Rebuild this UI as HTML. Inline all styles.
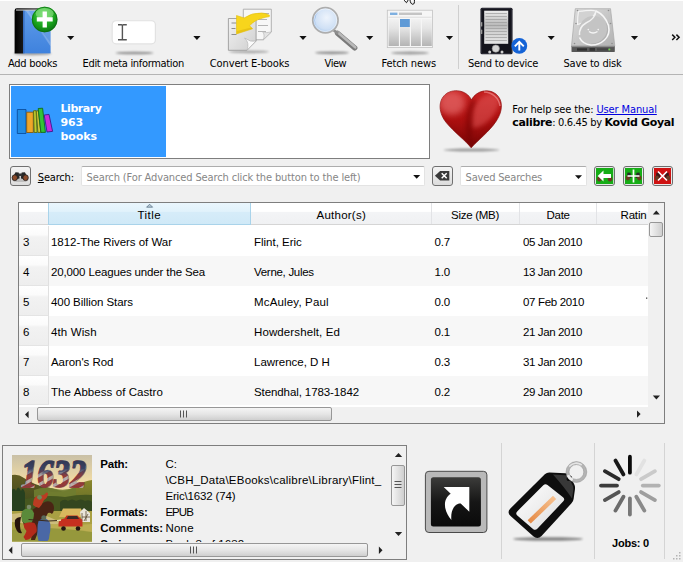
<!DOCTYPE html>
<html><head><meta charset="utf-8"><title>calibre</title>
<style>
html,body{margin:0;padding:0;}
body{width:683px;height:562px;overflow:hidden;background:#f0f0f0;position:relative;font-family:"DejaVu Sans Condensed","Liberation Sans",sans-serif;font-size:11px;color:#000;}
.t{position:absolute;white-space:nowrap;line-height:16px;}
.t a{color:#0000e0;text-decoration:underline;}
.abs{position:absolute;}
#gfx{position:absolute;left:0;top:0;}
.row{position:absolute;left:49px;width:600px;height:30px;}
.rh{position:absolute;left:19px;width:29px;height:29px;border-right:1px solid #e0e0e0;border-bottom:1px solid #e4e4e4;background:linear-gradient(#fff 0%,#fbfbfb 30%,#f2f2f2 38%,#eeeeee 100%);}
.dt{position:absolute;white-space:nowrap;font-family:"Liberation Sans","DejaVu Sans",sans-serif;font-size:11.5px;line-height:16px;}
</style></head>
<body>
<!-- toolbar -->
<div class="abs" style="left:0;top:0;width:683px;height:1px;background:#fff"></div>
<div class="abs" style="left:0;top:74px;width:683px;height:1px;background:#b4b4b4"></div>
<div class="abs" style="left:458px;top:5px;width:1px;height:64px;background:#cfcfcf"></div>

<!-- library list -->
<div class="abs" style="left:9px;top:84px;width:419px;height:73px;border:1px solid #7e7e7e;background:#fff">
  <div class="abs" style="left:1px;top:1px;width:155px;height:71px;background:#3399ff"></div>
</div>

<!-- search row -->
<div class="abs" style="left:10px;top:166px;width:19px;height:18px;border:1px solid #707070;border-radius:3px;background:linear-gradient(#f4f4f4,#dcdcdc)"></div>
<div class="abs" style="left:81px;top:166px;width:342px;height:18px;border:1px solid #e3e3e3;border-top-color:#adadad;border-radius:2px;background:#fff"></div>
<div class="abs" style="left:432px;top:166px;width:19px;height:18px;border:1px solid #707070;border-radius:3px;background:linear-gradient(#f4f4f4,#dcdcdc)"></div>
<div class="abs" style="left:460px;top:166px;width:125px;height:18px;border:1px solid #e3e3e3;border-top-color:#adadad;border-radius:2px;background:#fff"></div>

<!-- table -->
<div class="abs" id="table" style="left:18px;top:202px;width:645px;height:220px;border:1px solid #7e7e7e;background:#fff"></div>
<div class="abs" style="left:19px;top:203px;width:629px;height:22px;background:linear-gradient(#ffffff 0%,#ffffff 40%,#f3f4f6 45%,#f0f1f3 100%);border-bottom:1px solid #d5d5d5;box-sizing:border-box"></div>
<div class="abs" style="left:48px;top:203px;width:203px;height:22px;background:linear-gradient(#eaf6fd 0%,#e1f2fb 40%,#d6ecf9 45%,#d0e9f7 100%);border:1px solid #a9d3ea;border-top:none;box-sizing:border-box"></div>
<div class="abs" style="left:431px;top:203px;width:1px;height:21px;background:#e2e3e6"></div>
<div class="abs" style="left:519px;top:203px;width:1px;height:21px;background:#e2e3e6"></div>
<div class="abs" style="left:596px;top:203px;width:1px;height:21px;background:#e2e3e6"></div>
<div class="row" style="top:256px;background:#f7f7f7"></div>
<div class="row" style="top:316px;background:#f7f7f7"></div>
<div class="row" style="top:376px;background:#f7f7f7;height:29px"></div>
<div class="rh" style="top:226px"></div><div class="rh" style="top:256px"></div><div class="rh" style="top:286px"></div>
<div class="rh" style="top:316px"></div><div class="rh" style="top:346px"></div><div class="rh" style="top:376px;height:28px"></div>
<!-- table scrollbars -->
<div class="abs" style="left:648px;top:203px;width:16px;height:204px;background:#f0f0f0"></div>
<div class="abs" style="left:19px;top:407px;width:645px;height:16px;background:#f0f0f0"></div>
<div class="abs" style="left:649px;top:222px;width:12px;height:13px;border:1px solid #979797;border-radius:2px;background:linear-gradient(90deg,#f5f5f5,#e2e2e2 50%,#cfcfcf)"></div>
<div class="abs" style="left:37px;top:407px;width:293px;height:12px;border:1px solid #979797;border-radius:2px;background:linear-gradient(#f5f5f5,#e6e6e6 50%,#cfcfcf)"></div>

<!-- details panel -->
<div class="abs" id="details" style="left:2px;top:445px;width:403px;height:113px;border:1px solid #7e7e7e;background:#f0f0f0;overflow:hidden">
<span class="t" id="t51" style='left:97.3px;top:10px;font-family:"Liberation Sans","DejaVu Sans",sans-serif;font-size:11.5px;letter-spacing:-0.23px;font-weight:bold;'>Path:</span>
<span class="t" id="t52" style='left:162.4px;top:10px;font-family:"Liberation Sans","DejaVu Sans",sans-serif;font-size:11.5px;letter-spacing:0px;'>C:</span>
<span class="t" id="t53" style='left:162.4px;top:26px;font-family:"Liberation Sans","DejaVu Sans",sans-serif;font-size:11.5px;letter-spacing:0.212px;'>\CBH_Data\EBooks\calibre\Library\Flint_</span>
<span class="t" id="t54" style='left:162.4px;top:42px;font-family:"Liberation Sans","DejaVu Sans",sans-serif;font-size:11.5px;letter-spacing:-0.16px;'>Eric\1632 (74)</span>
<span class="t" id="t55" style='left:97.3px;top:58px;font-family:"Liberation Sans","DejaVu Sans",sans-serif;font-size:11.5px;letter-spacing:-0.225px;font-weight:bold;'>Formats:</span>
<span class="t" id="t56" style='left:162.4px;top:58px;font-family:"Liberation Sans","DejaVu Sans",sans-serif;font-size:11.5px;letter-spacing:-0.957px;'>EPUB</span>
<span class="t" id="t57" style='left:97.3px;top:74px;font-family:"Liberation Sans","DejaVu Sans",sans-serif;font-size:11.5px;letter-spacing:-0.052px;font-weight:bold;'>Comments:</span>
<span class="t" id="t58" style='left:162.4px;top:74px;font-family:"Liberation Sans","DejaVu Sans",sans-serif;font-size:11.5px;letter-spacing:0.25px;'>None</span>
<span class="t" id="t59" style='left:97.3px;top:90px;font-family:"Liberation Sans","DejaVu Sans",sans-serif;font-size:11.5px;letter-spacing:-0.194px;font-weight:bold;'>Series:</span>
<span class="t" id="t60" style='left:162.4px;top:90px;font-family:"Liberation Sans","DejaVu Sans",sans-serif;font-size:11.5px;letter-spacing:0.116px;'>Book 3 of 1632</span>
  <div class="abs" style="left:0;top:96px;width:403px;height:17px;background:#f0f0f0"></div>
  <div class="abs" style="left:387px;top:0;width:16px;height:96px;background:#f0f0f0"></div>
  <div class="abs" style="left:18px;top:97px;width:345px;height:12px;border:1px solid #979797;border-radius:2px;background:linear-gradient(#f5f5f5,#e6e6e6 50%,#cfcfcf)"></div>
  <div class="abs" style="left:388px;top:19px;width:12px;height:39px;border:1px solid #979797;border-radius:2px;background:linear-gradient(90deg,#f5f5f5,#e2e2e2 50%,#cfcfcf)"></div>
</div>

<!-- status separators -->
<div class="abs" style="left:501px;top:443px;width:1px;height:116px;background:#d4d4d4"></div>
<div class="abs" style="left:594px;top:443px;width:1px;height:116px;background:#d4d4d4"></div>
<div class="abs" style="left:664px;top:443px;width:1px;height:116px;background:#d4d4d4"></div>

<svg id="gfx" width="683" height="562" viewBox="0 0 683 562">
<defs>
  <filter id="b1" x="-20%" y="-200%" width="140%" height="500%"><feGaussianBlur stdDeviation="1.2"/></filter>
  <filter id="b03"><feGaussianBlur stdDeviation="0.35"/></filter>
  <filter id="b05"><feGaussianBlur stdDeviation="0.5"/></filter>
  <linearGradient id="spine" x1="0" x2="1" y1="0" y2="0"><stop offset="0" stop-color="#000"/><stop offset=".55" stop-color="#3a3a3a"/><stop offset="1" stop-color="#0a0a0a"/></linearGradient>
  <linearGradient id="bcover" x1="0" x2="0" y1="0" y2="1"><stop offset="0" stop-color="#5f9bea"/><stop offset="1" stop-color="#3f82dd"/></linearGradient>
  <radialGradient id="gball" cx=".45" cy=".3" r=".75"><stop offset="0" stop-color="#52d552"/><stop offset=".6" stop-color="#18a21c"/><stop offset="1" stop-color="#0a6a10"/></radialGradient>
  <linearGradient id="page" x1="0" x2="1" y1="0" y2="1"><stop offset="0" stop-color="#f2f2f2"/><stop offset="1" stop-color="#cfcfcf"/></linearGradient>
  <radialGradient id="lens" cx=".55" cy=".4" r=".65"><stop offset="0" stop-color="#eef4fc"/><stop offset=".7" stop-color="#cfe0f5"/><stop offset="1" stop-color="#a3c4ea"/></radialGradient>
  <linearGradient id="handle" x1="0" x2="1" y1="1" y2="0"><stop offset="0" stop-color="#7c7c7c"/><stop offset="1" stop-color="#c6c6c6"/></linearGradient>
  <linearGradient id="ncol" x1="0" x2="0" y1="0" y2="1"><stop offset="0" stop-color="#f2f2f2"/><stop offset=".35" stop-color="#e4e4e4"/><stop offset="1" stop-color="#b4b4b4"/></linearGradient>
  <linearGradient id="scr" x1="0" x2="0" y1="0" y2="1"><stop offset="0" stop-color="#ececec"/><stop offset=".45" stop-color="#b8b8b8"/><stop offset=".6" stop-color="#cfcfcf"/><stop offset="1" stop-color="#e6e6e6"/></linearGradient>
  <linearGradient id="hdtop" x1="0" x2="1" y1="0" y2="1"><stop offset="0" stop-color="#dcdcdc"/><stop offset="1" stop-color="#b2b2b2"/></linearGradient>
  <linearGradient id="heart" x1="0" x2="0" y1="0" y2="1"><stop offset="0" stop-color="#c62020"/><stop offset=".5" stop-color="#ad1010"/><stop offset="1" stop-color="#7a0606"/></linearGradient>
  <linearGradient id="jump" x1="0" x2="0" y1="0" y2="1"><stop offset="0" stop-color="#3c3c3a"/><stop offset=".5" stop-color="#161616"/><stop offset="1" stop-color="#0a0a0a"/></linearGradient>
  <linearGradient id="taglbl" x1="0" x2="1" y1="0" y2="1"><stop offset="0" stop-color="#ffffff"/><stop offset="1" stop-color="#dcdcdc"/></linearGradient>
  <linearGradient id="orange" x1="0" x2="1" y1="1" y2="0"><stop offset="0" stop-color="#e58a45"/><stop offset="1" stop-color="#f6c08e"/></linearGradient>
  <linearGradient id="sky" x1="0" x2="0" y1="0" y2="1"><stop offset="0" stop-color="#c9c0a6"/><stop offset=".3" stop-color="#f0dba4"/><stop offset="1" stop-color="#e8d9a6"/></linearGradient>
  <linearGradient id="hillL" x1="0" x2="0" y1="0" y2="1"><stop offset="0" stop-color="#625c22"/><stop offset="1" stop-color="#36441c"/></linearGradient>
  <linearGradient id="hillR" x1="0" x2="0" y1="0" y2="1"><stop offset="0" stop-color="#8a862c"/><stop offset="1" stop-color="#566426"/></linearGradient>
  <linearGradient id="flag" gradientUnits="userSpaceOnUse" x1="20" y1="470" x2="24" y2="477" spreadMethod="repeat"><stop offset="0" stop-color="#b23a2a"/><stop offset=".5" stop-color="#b23a2a"/><stop offset=".62" stop-color="#e2d6c6"/><stop offset=".88" stop-color="#e2d6c6"/><stop offset="1" stop-color="#b23a2a"/></linearGradient>
  <linearGradient id="flagb" gradientUnits="userSpaceOnUse" x1="0" y1="458" x2="0" y2="488"><stop offset="0" stop-color="#2c3452"/><stop offset=".35" stop-color="#3a4262"/><stop offset=".6" stop-color="#3a4262" stop-opacity=".25"/><stop offset="1" stop-color="#50385a" stop-opacity=".25"/></linearGradient>
  <clipPath id="heartclip"><path d="M471.400,99.800C466.500,89.600 452.500,88.300 445.300,94.500C437.600,101.400 438.900,113.500 446.200,122.500C454,132 466,141 471.200,147.800C477,141 489.500,131.500 496.300,121C503.300,110.500 503,100 496.200,94.200C489,88.300 476.800,90 471.400,99.800Z"/></clipPath>
  <filter id="b2" x="-30%" y="-30%" width="160%" height="160%"><feGaussianBlur stdDeviation="2"/></filter>
  <filter id="b3" x="-30%" y="-30%" width="160%" height="160%"><feGaussianBlur stdDeviation="3"/></filter>
  <clipPath id="coverclip"><rect x="12" y="455" width="80" height="86.5"/></clipPath>
</defs>

<!-- toolbar dropdown arrows -->
<g fill="#111">
 <path d="M67.1,36h7.2l-3.6,4z"/><path d="M193.3,36h7.2l-3.6,4z"/><path d="M299.4,36h7.2l-3.6,4z"/>
 <path d="M366.1,36h7.2l-3.6,4z"/><path d="M445.9,36h7.2l-3.6,4z"/><path d="M547.6,36h7.2l-3.6,4z"/><path d="M630.9,36h7.2l-3.6,4z"/>
</g>
<!-- extension chevrons -->
<g fill="none" stroke="#111" stroke-width="1.5"><path d="M672.2,34.6l2.7,2.7l-2.7,2.7"/><path d="M676.4,34.6l2.7,2.7l-2.7,2.7"/></g>
<!-- cursor fragment -->
<g fill="none" stroke="#111" stroke-width="1"><path d="M403.800,0l2.700,2.700l1.700,-2.700M410,0c.3,2.500 1.300,4.200 2.800,4.300c1.500,0 1.800,-2 1.600,-4.300"/></g>

<!-- ADD BOOKS -->
<ellipse cx="32.500" cy="53.600" rx="19" ry="1.600" fill="#000" opacity=".35" filter="url(#b1)"/>
<path d="M14.600,10.500q0,-2.300 2.300,-2.300h33.600v2h-27.300v43.200h-8.600z" fill="url(#spine)"/>
<rect x="23" y="10.200" width="27.600" height="43.200" fill="url(#bcover)"/>
<rect x="16" y="9.500" width="34.500" height="1.100" fill="#c4c4c4"/>
<rect x="23" y="10.600" width="1.600" height="42.800" fill="#2f62b4" opacity=".7"/>
<path d="M25.500,10.600h25.100v36z" fill="#fff" opacity=".12"/>
<path d="M25.500,10.600l3,0l22,36v-4z" fill="#fff" opacity=".15"/>
<circle cx="44.650" cy="19.500" r="12.800" fill="url(#gball)"/>
<circle cx="44.650" cy="19.500" r="12.300" fill="none" stroke="#0b6b10" stroke-width="1" opacity=".7"/>
<ellipse cx="44.650" cy="13.500" rx="9" ry="5.500" fill="#b6f2a8" opacity=".45" filter="url(#b05)"/>
<path d="M42.600,11.400h4.300v5.900h5.800v4.200h-5.800v5.900h-4.300v-5.900h-5.800v-4.200h5.800z" fill="#fff"/>

<!-- EDIT META -->
<ellipse cx="134.5" cy="53" rx="19" ry="1.3" fill="#000" opacity=".4" filter="url(#b1)"/>
<rect x="111.6" y="20.2" width="44.4" height="24.2" rx="4.5" fill="#e2e2e2"/>
<rect x="112.8" y="21.2" width="42" height="22" rx="3.5" fill="#fff"/>
<path d="M118,24.7h3.4q1,0 1,1q0,-1 1,-1h3.4M122.4,25.5v13.6M118,39.8h3.4q1,0 1,-1q0,1 1,1h3.4" fill="none" stroke="#555" stroke-width="1.4"/>

<!-- CONVERT -->
<ellipse cx="249" cy="51.8" rx="20" ry="1.4" fill="#000" opacity=".3" filter="url(#b1)"/>
<path d="M243.3,9.2h28v22.8l-8,7.8h-20z" fill="#f7f7f7" stroke="#a9a9a9" stroke-width=".9"/>
<g stroke="#b5b5b5" stroke-width="1"><path d="M258,13.5h11M258,19.5h9M258,25.5h10M258,31.5h8"/></g>
<path d="M271.3,32l-8,7.8q2,-5.5 -1,-8.3q4,2 9,0.5z" fill="#e4e4e4" stroke="#b0b0b0" stroke-width=".6"/>
<path d="M228.4,18.5h27.7v22.5l-9.2,9.3h-18.5z" fill="url(#page)" stroke="#9c9c9c" stroke-width=".9"/>
<g stroke="#8e8e8e" stroke-width="1.2"><path d="M231.5,23h5M231.5,28.5h4M231.5,34.5h5"/></g>
<path d="M256.1,41l-9.2,9.3q3,-7.5 -2.3,-12.3q6,4.500 11.5,3z" fill="#fbfbfb" stroke="#b0b0b0" stroke-width=".6"/>
<path d="M236.5,15.5V33.9L252.6,28.800L249.6,25.800C253,21.500 259,18.300 269.300,16.600L269.400,15.200Q266.500,13.200 261.600,13Q252,12.500 244.100,17.900Z" fill="#f7d51c" stroke="#e3bd08" stroke-width=".6"/>
<path d="M236.9,33.500l15.500,-4.900l-1.200,-1.100l-14.300,3.600z" fill="#c79c00" opacity=".3"/>

<!-- VIEW -->
<ellipse cx="332" cy="52.800" rx="17" ry="1.400" fill="#000" opacity=".4" filter="url(#b1)"/>
<path d="M337.500,33.200l17.300,14.700" stroke="#7a7a7a" stroke-width="5.200" stroke-linecap="round"/>
<path d="M337.900,32.600l17.300,14.700" stroke="#b9b9b9" stroke-width="2.600" stroke-linecap="round"/>
<path d="M333.500,30l4.500,3.800" stroke="#8e8e8e" stroke-width="2.800"/>
<circle cx="325.400" cy="20.200" r="12.600" fill="url(#lens)" stroke="#adadad" stroke-width="1.800"/>
<path d="M318.500,11.500a11,11 0 0 0 -1,17.500a14,14 0 0 1 1,-17.500z" fill="#8fb6e8" opacity=".8"/>
<circle cx="325.400" cy="20.200" r="11.400" fill="none" stroke="#fff" stroke-width=".7" opacity=".7"/>

<!-- NEWS -->
<ellipse cx="410" cy="53" rx="19" ry="1.4" fill="#000" opacity=".35" filter="url(#b1)"/>
<rect x="387.300" y="10.200" width="45.300" height="37.400" fill="#f6f6f6" stroke="#c2c2c2" stroke-width=".8"/>
<rect x="390" y="12.600" width="7.400" height="2.400" fill="#7fb0e0"/>
<rect x="399" y="12.600" width="23" height="2.400" fill="#c4c4c4"/>
<rect x="388.500" y="16.800" width="43" height=".8" fill="#d8d8d8"/>
<rect x="388.600" y="19" width="10.300" height="27" fill="url(#ncol)"/>
<rect x="400" y="19" width="9.800" height="27" fill="url(#ncol)"/>
<rect x="411" y="19" width="9.800" height="27" fill="url(#ncol)"/>
<rect x="422" y="19" width="9.800" height="27" fill="url(#ncol)"/>
<rect x="400" y="19" width="9.800" height="8" fill="#5f9ad6"/>

<!-- SEND TO DEVICE -->
<rect x="480.500" y="7.700" width="32" height="46.500" rx="1.500" fill="#14141c"/>
<rect x="481.300" y="8.500" width="30.400" height="45" rx="1" fill="none" stroke="#3a3a48" stroke-width=".6"/>
<rect x="484.200" y="10.700" width="24" height="33.100" fill="url(#scr)"/>
<g stroke="#9a9a9a" stroke-width=".9" opacity=".75"><path d="M485.500,13.500h21.400M485.500,16.500h21.400M485.500,19.500h21.400M485.500,22.500h21.400M485.500,25.500h21.400M485.500,28.500h21.400M485.500,31.500h21.400M485.500,34.500h21.400M485.500,37.500h21.400M485.500,40.500h21.400"/></g>
<rect x="481" y="22" width="1.300" height="4.500" rx=".6" fill="#9a9a9a"/><rect x="481" y="29.500" width="1.300" height="4.500" rx=".6" fill="#9a9a9a"/>
<circle cx="495.800" cy="48.600" r="3.700" fill="#d4d4d4" stroke="#8a8a8a" stroke-width=".6"/>
<circle cx="489.700" cy="52" r="1.500" fill="#cfcfcf"/><circle cx="502" cy="52" r="1.500" fill="#cfcfcf"/>
<circle cx="519.300" cy="45.900" r="7.900" fill="#1463d6"/>
<path d="M519.300,42v8.500M514.800,46.300l4.500,-4.500l4.500,4.500" fill="none" stroke="#fff" stroke-width="1.900"/>

<!-- SAVE TO DISK -->
<path d="M575.300,8.700h35.200l4.300,37.200h-43.300z" fill="url(#hdtop)" stroke="#a6a6a6" stroke-width=".7"/>
<path d="M571.500,45.900h43.300v5.300q0,.9 -.9,.9h-41.500q-.9,0 -.9,-.9z" fill="#585858"/>
<rect x="571.500" y="45.900" width="43.300" height="1.200" fill="#8c8c8c"/>
<rect x="577" y="48.300" width="10" height="2.300" fill="#2e2e2e"/><rect x="589.500" y="48" width="5.500" height="2.800" fill="#333"/><rect x="597" y="48.300" width="11" height="2.300" fill="#444"/>
<circle cx="609.400" cy="49.400" r="1" fill="#6ad04a"/>
<g filter="url(#b03)">
<path d="M578.500,11.500q14,-2 17.500,-0.500q-2,9 -18.500,13.500q0,-8 1,-13z" fill="#d2d2d2" stroke="#f4f4f4" stroke-width="1.200"/>
<circle cx="593.400" cy="30.500" r="14.500" fill="#c4c4c4"/>
<path d="M607,22q3,8 -1,15q-6,8 -15,8" fill="none" stroke="#b2b2b2" stroke-width="2.500"/>
<path d="M596,11q9,4 12.500,14.500q2,9 -4,14.500q-6,5.500 -14,5q-8,-1 -11,-7.500" fill="none" stroke="#f6f6f6" stroke-width="1.600"/>
<path d="M596,11q-1,8 -10,12q-7,4 -6.500,12" fill="none" stroke="#f2f2f2" stroke-width="1.500"/>
<path d="M589,31.500q4,3 8.500,0" fill="none" stroke="#f4f4f4" stroke-width="1.500"/>
<circle cx="588.300" cy="29.600" r=".8" fill="#f4f4f4"/><circle cx="598.200" cy="29.600" r=".8" fill="#f4f4f4"/>
</g>
<g fill="#8e8e8e"><circle cx="577.500" cy="10.500" r=".8"/><circle cx="608.500" cy="10.500" r=".8"/><circle cx="576" cy="23.500" r=".8"/><circle cx="610.500" cy="23.500" r=".8"/><circle cx="574.500" cy="43.500" r=".8"/><circle cx="612" cy="43.500" r=".8"/></g>

<!-- LIBRARY BOOKS -->
<g stroke-width=".9" stroke-linejoin="round">
<path d="M17.300,109.500h8.700v24h-8.700z" fill="#218be3" stroke="#0b4f9f"/>
<path d="M26.700,112.200h6.600v20.300h-6.600z" fill="#efa62a" stroke="#8a5a10"/>
<path d="M33.500,110.800l2.600,-.2l1,21.900h-2.900z" fill="#bccb2e" stroke="#5c6a10"/>
<path d="M36.300,111l2,-.3l2.500,21.700h-2.900z" fill="#cfc83a" stroke="#5c6a10"/>
<path d="M38.200,108.500l4.400,-.3l2.800,24.200h-4.500z" fill="#34c236" stroke="#136a18"/>
<path d="M44.200,115l4.800,-.6l3.600,17l-5.600,.6z" fill="#c92bd9" stroke="#3a1c8c"/>
</g>

<!-- HEART -->
<ellipse cx="471.500" cy="150" rx="28" ry="1.500" fill="#000" opacity=".35" filter="url(#b1)"/>
<path id="hp" d="M471.400,99.800C466.500,89.600 452.500,88.300 445.300,94.500C437.600,101.400 438.900,113.500 446.200,122.500C454,132 466,141 471.200,147.800C477,141 489.500,131.500 496.300,121C503.300,110.500 503,100 496.200,94.200C489,88.300 476.800,90 471.400,99.800Z" fill="url(#heart)" stroke="#8a0a0a" stroke-width=".7"/>
<g clip-path="url(#heartclip)">
<ellipse cx="452" cy="103" rx="13" ry="12" fill="#ee7878" opacity=".6" filter="url(#b3)"/>
<path d="M476,104C482,94 492,92 499,97C500,104 497,112 490,119C484,125 478,128 472,128C471,118 472,110 476,104Z" fill="#f07070" opacity=".4" filter="url(#b2)"/>
<path d="M471.500,100C466,112 462,130 471,147C474,130 470,112 476,101Z" fill="#6a0000" opacity=".45" filter="url(#b2)"/>
<path d="M484,92C492,92 499,98 500,106" fill="none" stroke="#ffb0b0" stroke-width="1.500" opacity=".5" filter="url(#b05)"/>
<path d="M440,118C450,132 462,141 471,150C480,141 494,130 502,116L502,150L440,150Z" fill="#5a0000" opacity=".35" filter="url(#b3)"/>
</g>

<!-- BINOCULARS -->
<ellipse cx="20.200" cy="180.500" rx="8" ry="1.600" fill="#bdbdbd"/>
<path d="M15.500,172.200l3.200,.3l1,6l-6.200,1.200l-.6,-2.500z" fill="#262626"/>
<path d="M24.900,172.200l-3.200,.3l-1,6l6.200,1.200l.6,-2.500z" fill="#262626"/>
<rect x="18.200" y="173.500" width="4" height="2.600" fill="#333"/>
<ellipse cx="14.800" cy="177.700" rx="2.700" ry="2.900" fill="#8a4a2a"/><ellipse cx="14.800" cy="177.700" rx="2.700" ry="2.900" fill="none" stroke="#1e1e1e" stroke-width=".8"/>
<ellipse cx="25.600" cy="177.700" rx="2.700" ry="2.900" fill="#8a4a2a"/><ellipse cx="25.600" cy="177.700" rx="2.700" ry="2.900" fill="none" stroke="#1e1e1e" stroke-width=".8"/>

<!-- combo arrows -->
<path d="M413.200,175h7l-3.500,3.800z" fill="#111"/>
<path d="M575,175.200h7l-3.500,3.700z" fill="#111"/>

<!-- CLEAR -->
<path d="M434.900,175.800l5.200,-4.700h9.200v9.400h-9.200z" fill="#3a3a3a"/>
<path d="M441.700,173.300l5,5M446.700,173.300l-5,5" stroke="#fff" stroke-width="1.500"/>

<!-- saved search buttons -->
<g>
<rect x="594.500" y="166.500" width="20" height="19" rx="2.500" fill="#e9e9e9" stroke="#6e6e6e"/>
<rect x="596" y="168" width="17.200" height="16" fill="#16ad16"/>
<ellipse cx="599.300" cy="179" rx="2.300" ry="2.500" fill="#6a3a22"/><ellipse cx="610" cy="179" rx="2.300" ry="2.500" fill="#6a3a22"/>
<path d="M597.700,176l5.800,-5.600v3.600h7.500v4h-7.500v3.600z" fill="#fff"/>
<rect x="623.500" y="166.500" width="20" height="19" rx="2.500" fill="#e9e9e9" stroke="#6e6e6e"/>
<rect x="625" y="168" width="17" height="16" fill="#16ad16"/>
<path d="M627.500,172.500l3,.3l1,5l-5,1zM639.500,172.500l-3,.3l-1,5l5,1z" fill="#2a2a2a"/>
<ellipse cx="627.800" cy="178" rx="2.200" ry="2.400" fill="#6a3a22"/><ellipse cx="639.300" cy="178" rx="2.200" ry="2.400" fill="#6a3a22"/>
<path d="M633.500,169.500v13M627.500,176h12" stroke="#fff" stroke-width="1.700"/>
<rect x="652.500" y="166.500" width="20" height="19" rx="2.500" fill="#e9e9e9" stroke="#6e6e6e"/>
<rect x="654" y="168" width="17" height="16" fill="#cf1212"/>
<path d="M656.500,172.500l3,.3l1,5l-5,1zM668.500,172.500l-3,.3l-1,5l5,1z" fill="#3a1a1a"/>
<ellipse cx="656.800" cy="178" rx="2.200" ry="2.400" fill="#6a3a22"/><ellipse cx="668.300" cy="178" rx="2.200" ry="2.400" fill="#6a3a22"/>
<path d="M658,171.500l9,9M667,171.500l-9,9" stroke="#fff" stroke-width="1.600"/>
</g>

<rect x="646" y="297.5" width="1.3" height="1.3" fill="#444"/>
<!-- table: sort indicator + scroll arrows + grips -->
<path d="M146.600,207.200l3,-3l3,3z" fill="#b9cbd8" stroke="#5a7488" stroke-width=".8"/>
<g fill="#222">
<path d="M652.800,214.400l3.500,-4l3.500,4z"/>
<path d="M652.800,395.600l3.600,4l3.600,-4z"/>
<path d="M28.600,411l-3.600,3.600l3.600,3.600z"/>
<path d="M637,410.500l3.600,3.600l-3.600,3.600z"/>
<path d="M394.800,456.900l3.700,-4l3.700,4z"/>
<path d="M394.800,532l3.700,3.900l3.700,-3.900z"/>
<path d="M12.300,546.600l-3.600,3.700l3.600,3.700z"/>
<path d="M378.900,546.600l3.600,3.700l-3.600,3.700z"/>
</g>
<g stroke="#555" stroke-width="1">
<path d="M180.500,410.500v7M183.500,410.500v7M186.500,410.500v7"/>
<path d="M190.500,546.500v7M193.500,546.500v7M196.500,546.500v7"/>
<path d="M394.500,481.500h7M394.500,484.500h7M394.500,487.500h7"/>
</g>

<!-- COVER -->
<g clip-path="url(#coverclip)">
<rect x="12" y="455" width="80" height="87" fill="url(#sky)"/>
<path d="M12,475q6,-1.500 12,3q10,7 22,9q10,2 18,5v22h-52z" fill="url(#hillL)"/>
<path d="M92,480q-8,1 -16,6q-8,5 -16,6q-6,1 -12,-1v24h44z" fill="url(#hillR)"/>
<path d="M34,490q10,-4 22,-1q10,2 20,-2v20h-42z" fill="#6f7c30" opacity=".9"/>
<path d="M12,490q2,-3 4,1q2,-7 5,0q2,-5 4,2v20h-13z" fill="#27401f"/>
<path d="M25,499q20,-5 40,-2q15,-3 27,-2v17h-67z" fill="#46561f"/>
<path d="M60,502q4,-4 8,-1q4,-3 8,0q5,-3 9,0q4,-2 7,1v9h-32z" fill="#33461f"/>
<rect x="12" y="511" width="80" height="31" fill="#a9a043"/>
<path d="M12,514q16,-3 30,0q10,4 22,10q-20,2 -52,-2z" fill="#cdbd7c"/>
<path d="M50,524q20,2 42,0v18h-50z" fill="#bcae52"/>
<path d="M12,530q30,-5 80,2v10h-80z" fill="#96983c"/>
<path d="M59,517l4,-8.500h18l3,8.500z" fill="#d9b85e"/>
<path d="M80,512l4,-4l6,5v9h-8z" fill="#e9e5da"/>
<path d="M82,513v8M86,511v10M82,517h8M84,521l4,-7" stroke="#5c4c34" stroke-width=".8" fill="none"/>
<path d="M58.500,523q1,-4 6,-4.500l2,-3h11l3,3q2,.5 2,3v5h-24z" fill="#c6301f"/>
<path d="M66.500,519l1.500,-3h9l2,3z" fill="#3c2a26"/>
<circle cx="63.500" cy="528.500" r="2.300" fill="#241612"/><circle cx="78" cy="528.500" r="2.300" fill="#241612"/>
<path d="M15,520q2,-3 6,-3q-1,5 -1,9q0,4 2,7q-3,1 -5,-2q-3,-5 -2,-11z" fill="#26130b"/>
<path d="M21,517q6,-2 10,-6q6,-5 12,-8q4,-3 8,-1q3,2 3,6q0,4 -2,6q-2,-2 -4,-1q-2,5 -6,9q-3,4 -4,10l-3,8h-4l1,-9q-3,-4 -6,-4q-4,-2 -5,-16z" fill="#4a2414"/>
<path d="M34,499q2,-4 6,-3.500q5,0 6,-3l2,.5q0,5 -4,7q-2,5 -5,8q-4,-1 -6,-3q0,-3 1,-6z" fill="#bb3c22"/>
<circle cx="39.500" cy="497.300" r="2.400" fill="#6f8a5a"/>
<path d="M22,512q2,-4 7,-3.500q4,1 5,5q0,6 -3,10q-5,2 -9,-2q-1,-5 0,-9.500z" fill="#5a8a3a"/>
<circle cx="29" cy="507" r="2.300" fill="#7a8a6a"/>
<path d="M23.500,524q5,-3 11,-1q3,4 2,9q-3,3 -5,5q-2,3 -6,3l-2,-3q2,-3 3,-6q-3,-3 -3,-7z" fill="#b32a1a"/>
<path d="M38.500,521q3,-3 8,-2q4,2 4,7q0,5 -1,9q0,4 -2,6h-9q-2,-6 -1,-12q0,-5 1,-8z" fill="#4a68a6"/>
<circle cx="43.800" cy="517.800" r="2.500" fill="#5a6a5a"/>
<path d="M28.500,519.500l20,1.500l10,-.5" stroke="#3a2a1a" stroke-width="1" fill="none"/>
<path d="M57,520.500l4,-.4" stroke="#f4e8c0" stroke-width="1.200"/>
<text x="21" y="486.500" font-family="'Liberation Serif','DejaVu Serif',serif" font-size="40" font-weight="bold" font-style="italic" textLength="65" lengthAdjust="spacingAndGlyphs" fill="#2a2a38" stroke="#2a2a38" stroke-width="1.6" opacity=".5" transform="translate(.8 .8)">1632</text>
<text x="21" y="486.500" font-family="'Liberation Serif','DejaVu Serif',serif" font-size="40" font-weight="bold" font-style="italic" textLength="65" lengthAdjust="spacingAndGlyphs" fill="url(#flag)" stroke="url(#flag)" stroke-width="1.3" stroke-linejoin="round">1632</text>
<text x="21" y="486.500" font-family="'Liberation Serif','DejaVu Serif',serif" font-size="40" font-weight="bold" font-style="italic" textLength="65" lengthAdjust="spacingAndGlyphs" fill="url(#flagb)" stroke="url(#flagb)" stroke-width="1.3" stroke-linejoin="round">1632</text>
</g>

<!-- JUMP -->
<rect x="425.400" y="471.300" width="61.500" height="61.200" rx="3.500" fill="#b9b9b9" stroke="#4a4a4a" stroke-width="1"/>
<rect x="430.900" y="477.200" width="50" height="49.300" rx="2.500" fill="url(#jump)"/>
<path d="M443.700,487H469.300V511.800L460.700,503.400C455,503 450.300,510 451.400,520.100C444.500,512 441.500,500 450.700,493.800Z" fill="#fff"/>

<!-- TAG -->
<ellipse cx="548" cy="539" rx="35" ry="1.800" fill="#000" opacity=".45" filter="url(#b1)"/>
<path d="M549.500,472.500L565.500,473.200Q568.500,473.500 570,476L574.300,484.500Q575.300,486.500 575,489L573.600,499Q573.300,501.500 571.500,503.300L541.500,536Q537.500,540 533.300,536.300L510.600,516Q506.600,512.400 510.400,508.600L544.800,474.300Q546.800,472.400 549.500,472.500Z" fill="#0e0e0e"/>
<path d="M553,474.500L565.500,475.200Q567.500,475.500 568.500,477.300L573,486Q573.500,488 573.300,490L572,498.500Q565,488 553,474.500Z" fill="#4a4a4a" opacity=".7"/>
<path d="M543.300,485.300Q545.300,483.300 547.500,485L563,497.200Q565.300,499.200 563.300,501.300L537.300,528.800Q535.300,530.800 533,529L517.300,515.500Q515.200,513.500 517.200,511.400Z" fill="url(#taglbl)"/>
<path d="M529.200,521.900L554.600,497.400" stroke="url(#orange)" stroke-width="4.600"/>
<ellipse cx="569.300" cy="478.300" rx="3" ry="2.200" fill="#0a0a0a" transform="rotate(-45 569.300 478.300)"/>
<circle cx="576.400" cy="472" r="8.900" fill="none" stroke="#b4b4b4" stroke-width="3"/>
<circle cx="576.400" cy="472" r="10.400" fill="none" stroke="#8e8e8e" stroke-width=".5"/>
<circle cx="576.400" cy="472" r="7.400" fill="none" stroke="#8e8e8e" stroke-width=".5"/>
<path d="M569.200,466.500a9,9 0 0 1 12.500,-1.500" fill="none" stroke="#e4e4e4" stroke-width="1.600"/>
<path d="M568,475.200a8.900,8.900 0 0 0 4.600,4.900" fill="none" stroke="#ececec" stroke-width="2.700"/>

<!-- SPINNER -->
<g stroke-width="3.800" stroke-linecap="round" transform="translate(629.900 485.600)">
<path d="M0.00,-12.90L0.00,-28.90" stroke="#0a0a0a"/>
<path d="M6.45,-11.17L14.45,-25.03" stroke="#e2e2e2"/>
<path d="M11.17,-6.45L25.03,-14.45" stroke="#cacaca"/>
<path d="M12.90,-0.00L28.90,-0.00" stroke="#b2b2b2"/>
<path d="M11.17,6.45L25.03,14.45" stroke="#9e9e9e"/>
<path d="M6.45,11.17L14.45,25.03" stroke="#8a8a8a"/>
<path d="M0.00,12.90L0.00,28.90" stroke="#787878"/>
<path d="M-6.45,11.17L-14.45,25.03" stroke="#6c6c6c"/>
<path d="M-11.17,6.45L-25.03,14.45" stroke="#555"/>
<path d="M-12.90,0.00L-28.90,0.00" stroke="#3c3c3c"/>
<path d="M-11.17,-6.45L-25.03,-14.45" stroke="#2a2a2a"/>
<path d="M-6.45,-11.17L-14.45,-25.03" stroke="#181818"/>
</g>

<!-- size grip -->
<g fill="#b4b4b4"><rect x="679" y="552" width="1.500" height="1.500"/><rect x="676" y="555" width="1.500" height="1.500"/><rect x="679" y="555" width="1.500" height="1.500"/><rect x="673" y="558" width="1.500" height="1.500"/><rect x="676" y="558" width="1.500" height="1.500"/><rect x="679" y="558" width="1.500" height="1.500"/></g>

</svg>
<span class="t" id="t0" style='left:8px;top:56px;font-family:"DejaVu Sans Condensed","Liberation Sans",sans-serif;font-size:11px;letter-spacing:-0.285px;color:#000;'>Add books</span>
<span class="t" id="t1" style='left:82.5px;top:56px;font-family:"DejaVu Sans Condensed","Liberation Sans",sans-serif;font-size:11px;letter-spacing:-0.32px;color:#000;'>Edit meta information</span>
<span class="t" id="t2" style='left:209.8px;top:56px;font-family:"DejaVu Sans Condensed","Liberation Sans",sans-serif;font-size:11px;letter-spacing:-0.125px;color:#000;'>Convert E-books</span>
<span class="t" id="t3" style='left:324.6px;top:56px;font-family:"DejaVu Sans Condensed","Liberation Sans",sans-serif;font-size:11px;letter-spacing:-0.492px;color:#000;'>View</span>
<span class="t" id="t4" style='left:381.5px;top:56px;font-family:"DejaVu Sans Condensed","Liberation Sans",sans-serif;font-size:11px;letter-spacing:-0.105px;color:#000;'>Fetch news</span>
<span class="t" id="t5" style='left:468px;top:56px;font-family:"DejaVu Sans Condensed","Liberation Sans",sans-serif;font-size:11px;letter-spacing:-0.262px;color:#000;'>Send to device</span>
<span class="t" id="t6" style='left:563.5px;top:56px;font-family:"DejaVu Sans Condensed","Liberation Sans",sans-serif;font-size:11px;letter-spacing:-0.203px;color:#000;'>Save to disk</span>
<span class="t" id="t7" style='left:60.5px;top:101px;font-family:"DejaVu Sans","Liberation Sans",sans-serif;font-size:11px;letter-spacing:-0.444px;color:#fff;font-weight:bold;'>Library</span>
<span class="t" id="t8" style='left:60.5px;top:114.5px;font-family:"DejaVu Sans","Liberation Sans",sans-serif;font-size:11px;letter-spacing:-0.156px;color:#fff;font-weight:bold;'>963</span>
<span class="t" id="t9" style='left:60.5px;top:128.5px;font-family:"DejaVu Sans","Liberation Sans",sans-serif;font-size:11px;letter-spacing:-0.072px;color:#fff;font-weight:bold;'>books</span>
<span class="t" id="t10" style='left:512.3px;top:101.5px;font-family:"DejaVu Sans Condensed","Liberation Sans",sans-serif;font-size:11px;letter-spacing:-0.12px;'>For help see the: <a>User Manual</a></span>
<span class="t" id="t11" style='left:512.3px;top:114.5px;font-family:"DejaVu Sans Condensed","Liberation Sans",sans-serif;font-size:11px;letter-spacing:-0.337px;'><b style="font-family:DejaVu Sans">calibre</b>: 0.6.45 by <b style="font-family:DejaVu Sans">Kovid Goyal</b></span>
<span class="t" id="t12" style='left:37.8px;top:170px;font-family:"DejaVu Sans Condensed","Liberation Sans",sans-serif;font-size:11px;letter-spacing:-0.19px;'><u>S</u>earch:</span>
<span class="t" id="t13" style='left:86.6px;top:170px;font-family:"DejaVu Sans Condensed","Liberation Sans",sans-serif;font-size:11px;letter-spacing:-0.13px;color:#868686;'>Search (For Advanced Search click the button to the left)</span>
<span class="t" id="t14" style='left:465.6px;top:170px;font-family:"DejaVu Sans Condensed","Liberation Sans",sans-serif;font-size:11px;letter-spacing:-0.175px;color:#868686;'>Saved Searches</span>
<span class="t" id="t15" style='left:137.5px;top:207px;font-family:"Liberation Sans","DejaVu Sans",sans-serif;font-size:11.5px;letter-spacing:0.438px;color:#000;'>Title</span>
<span class="t" id="t16" style='left:316.5px;top:207px;font-family:"Liberation Sans","DejaVu Sans",sans-serif;font-size:11.5px;letter-spacing:0.245px;color:#000;'>Author(s)</span>
<span class="t" id="t17" style='left:451px;top:207px;font-family:"Liberation Sans","DejaVu Sans",sans-serif;font-size:11.5px;letter-spacing:-0.276px;color:#000;'>Size (MB)</span>
<span class="t" id="t18" style='left:546.6px;top:207px;font-family:"Liberation Sans","DejaVu Sans",sans-serif;font-size:11.5px;letter-spacing:-0.324px;color:#000;'>Date</span>
<span class="t" id="t19" style='left:620.5px;top:207px;font-family:"Liberation Sans","DejaVu Sans",sans-serif;font-size:11.5px;letter-spacing:-0.172px;color:#000;'>Ratin</span>
<span class="t" id="t20" style='left:23px;top:234px;font-family:"Liberation Sans","DejaVu Sans",sans-serif;font-size:11.5px;letter-spacing:0px;'>3</span>
<span class="t" id="t21" style='left:51px;top:234px;font-family:"Liberation Sans","DejaVu Sans",sans-serif;font-size:11.5px;letter-spacing:-0.03px;'>1812-The Rivers of War</span>
<span class="t" id="t22" style='left:254px;top:234px;font-family:"Liberation Sans","DejaVu Sans",sans-serif;font-size:11.5px;letter-spacing:-0.02px;'>Flint, Eric</span>
<span class="t" id="t23" style='left:434.6px;top:234px;font-family:"Liberation Sans","DejaVu Sans",sans-serif;font-size:11.5px;letter-spacing:-0.167px;'>0.7</span>
<span class="t" id="t24" style='left:523px;top:234px;font-family:"Liberation Sans","DejaVu Sans",sans-serif;font-size:11.5px;letter-spacing:-0.392px;'>05 Jan 2010</span>
<span class="t" id="t25" style='left:23px;top:264px;font-family:"Liberation Sans","DejaVu Sans",sans-serif;font-size:11.5px;letter-spacing:0px;'>4</span>
<span class="t" id="t26" style='left:51px;top:264px;font-family:"Liberation Sans","DejaVu Sans",sans-serif;font-size:11.5px;letter-spacing:-0.141px;'>20,000 Leagues under the Sea</span>
<span class="t" id="t27" style='left:254px;top:264px;font-family:"Liberation Sans","DejaVu Sans",sans-serif;font-size:11.5px;letter-spacing:-0.291px;'>Verne, Jules</span>
<span class="t" id="t28" style='left:434.6px;top:264px;font-family:"Liberation Sans","DejaVu Sans",sans-serif;font-size:11.5px;letter-spacing:-0.167px;'>1.0</span>
<span class="t" id="t29" style='left:523px;top:264px;font-family:"Liberation Sans","DejaVu Sans",sans-serif;font-size:11.5px;letter-spacing:-0.392px;'>13 Jan 2010</span>
<span class="t" id="t30" style='left:23px;top:294px;font-family:"Liberation Sans","DejaVu Sans",sans-serif;font-size:11.5px;letter-spacing:0px;'>5</span>
<span class="t" id="t31" style='left:51px;top:294px;font-family:"Liberation Sans","DejaVu Sans",sans-serif;font-size:11.5px;letter-spacing:-0.065px;'>400 Billion Stars</span>
<span class="t" id="t32" style='left:254px;top:294px;font-family:"Liberation Sans","DejaVu Sans",sans-serif;font-size:11.5px;letter-spacing:0.165px;'>McAuley, Paul</span>
<span class="t" id="t33" style='left:434.6px;top:294px;font-family:"Liberation Sans","DejaVu Sans",sans-serif;font-size:11.5px;letter-spacing:-0.167px;'>0.0</span>
<span class="t" id="t34" style='left:523px;top:294px;font-family:"Liberation Sans","DejaVu Sans",sans-serif;font-size:11.5px;letter-spacing:-0.327px;'>07 Feb 2010</span>
<span class="t" id="t35" style='left:23px;top:324px;font-family:"Liberation Sans","DejaVu Sans",sans-serif;font-size:11.5px;letter-spacing:0px;'>6</span>
<span class="t" id="t36" style='left:51px;top:324px;font-family:"Liberation Sans","DejaVu Sans",sans-serif;font-size:11.5px;letter-spacing:0.119px;'>4th Wish</span>
<span class="t" id="t37" style='left:254px;top:324px;font-family:"Liberation Sans","DejaVu Sans",sans-serif;font-size:11.5px;letter-spacing:0.108px;'>Howdershelt, Ed</span>
<span class="t" id="t38" style='left:434.6px;top:324px;font-family:"Liberation Sans","DejaVu Sans",sans-serif;font-size:11.5px;letter-spacing:-0.167px;'>0.1</span>
<span class="t" id="t39" style='left:523px;top:324px;font-family:"Liberation Sans","DejaVu Sans",sans-serif;font-size:11.5px;letter-spacing:-0.392px;'>21 Jan 2010</span>
<span class="t" id="t40" style='left:23px;top:354px;font-family:"Liberation Sans","DejaVu Sans",sans-serif;font-size:11.5px;letter-spacing:0px;'>7</span>
<span class="t" id="t41" style='left:51px;top:354px;font-family:"Liberation Sans","DejaVu Sans",sans-serif;font-size:11.5px;letter-spacing:-0.049px;'>Aaron's Rod</span>
<span class="t" id="t42" style='left:254px;top:354px;font-family:"Liberation Sans","DejaVu Sans",sans-serif;font-size:11.5px;letter-spacing:-0.02px;'>Lawrence, D H</span>
<span class="t" id="t43" style='left:434.6px;top:354px;font-family:"Liberation Sans","DejaVu Sans",sans-serif;font-size:11.5px;letter-spacing:-0.167px;'>0.3</span>
<span class="t" id="t44" style='left:523px;top:354px;font-family:"Liberation Sans","DejaVu Sans",sans-serif;font-size:11.5px;letter-spacing:-0.392px;'>31 Jan 2010</span>
<span class="t" id="t45" style='left:23px;top:384px;font-family:"Liberation Sans","DejaVu Sans",sans-serif;font-size:11.5px;letter-spacing:0px;'>8</span>
<span class="t" id="t46" style='left:51px;top:384px;font-family:"Liberation Sans","DejaVu Sans",sans-serif;font-size:11.5px;letter-spacing:0.07px;'>The Abbess of Castro</span>
<span class="t" id="t47" style='left:254px;top:384px;font-family:"Liberation Sans","DejaVu Sans",sans-serif;font-size:11.5px;letter-spacing:-0.095px;'>Stendhal, 1783-1842</span>
<span class="t" id="t48" style='left:434.6px;top:384px;font-family:"Liberation Sans","DejaVu Sans",sans-serif;font-size:11.5px;letter-spacing:-0.167px;'>0.2</span>
<span class="t" id="t49" style='left:523px;top:384px;font-family:"Liberation Sans","DejaVu Sans",sans-serif;font-size:11.5px;letter-spacing:-0.392px;'>29 Jan 2010</span>
<span class="t" id="t50" style='left:612px;top:534.5px;font-family:"Liberation Sans","DejaVu Sans",sans-serif;font-size:11px;letter-spacing:-0.217px;font-weight:bold;'>Jobs: 0</span>
</body></html>
